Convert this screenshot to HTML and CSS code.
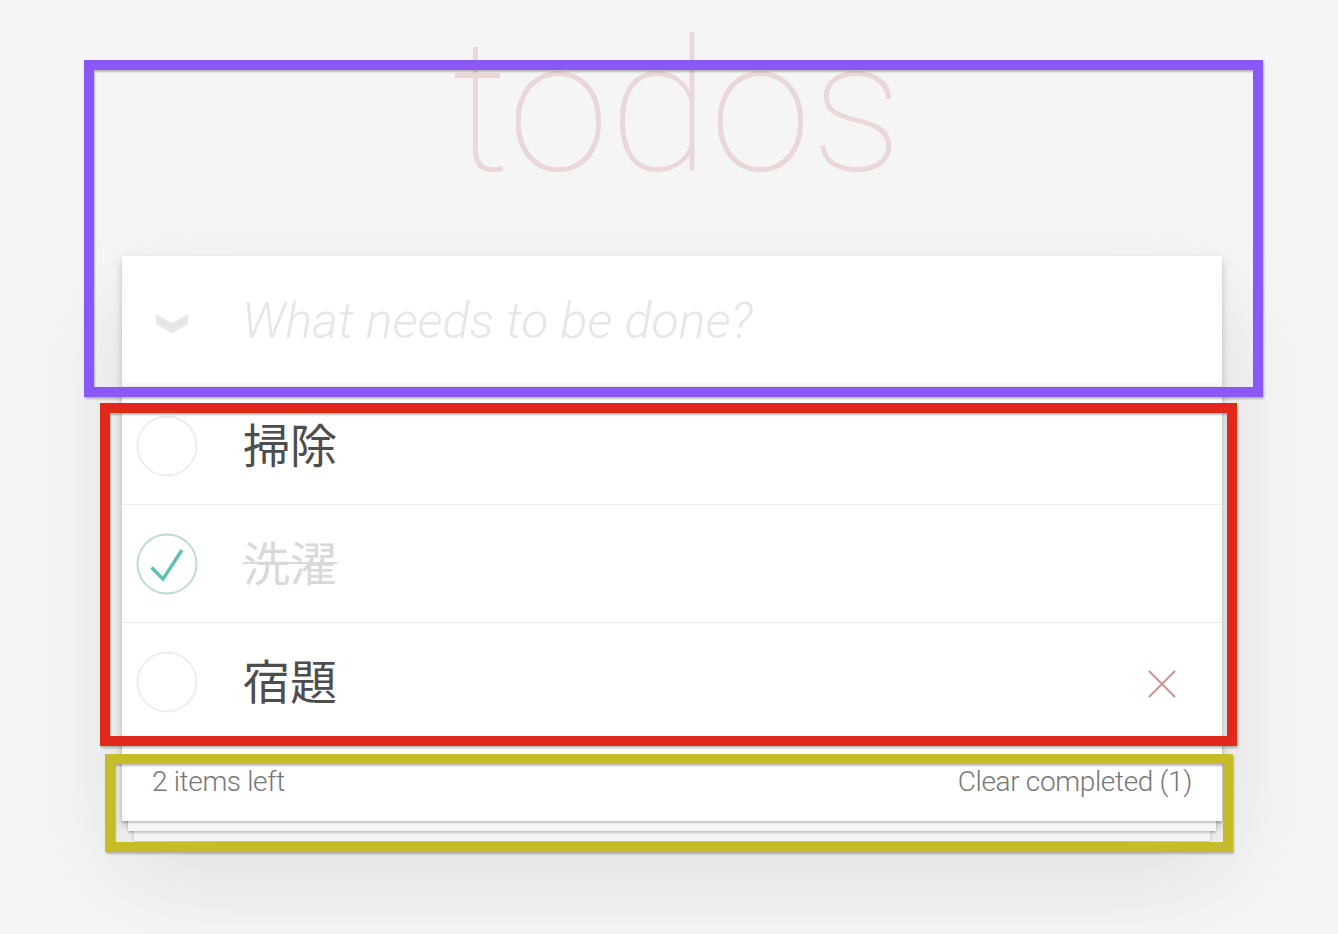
FILE: index.html
```html
<!DOCTYPE html>
<html lang="ja">
<head>
<meta charset="utf-8">
<title>todos</title>
<link rel="stylesheet" href="styles.css">
</head>
<body>
<div class="page">
  <h1 class="title">todos</h1>
  <section class="app">
    <header class="new-row">
      <span class="toggle-all">
        <svg width="32" height="20" viewBox="0 0 32 20"><polygon points="0,0 16,9 32,0 32,10 16,19.5 0,10" fill="#e6e6e6"/></svg>
      </span>
      <input class="new-todo" type="text" placeholder="What needs to be done?">
    </header>
    <ul class="list">
      <li class="item">
        <span class="check">
          <svg width="62" height="62" viewBox="0 0 62 62"><circle cx="31" cy="31" r="29.5" fill="none" stroke="#ededed" stroke-width="2"/></svg>
        </span>
        <span class="label">掃除</span>
      </li>
      <li class="item done">
        <span class="check">
          <svg width="62" height="62" viewBox="0 0 62 62"><circle cx="31" cy="31" r="29.5" fill="none" stroke="#bddad5" stroke-width="2"/><polyline points="15.5,34.5 27,46 46,17" fill="none" stroke="#5dc2af" stroke-width="3.4"/></svg>
        </span>
        <span class="label">洗濯</span>
      </li>
      <li class="item">
        <span class="check">
          <svg width="62" height="62" viewBox="0 0 62 62"><circle cx="31" cy="31" r="29.5" fill="none" stroke="#ededed" stroke-width="2"/></svg>
        </span>
        <span class="label">宿題</span>
        <span class="destroy">
          <svg width="30" height="30" viewBox="0 0 30 30"><path d="M2 2 L28 28 M28 2 L2 28" stroke="#cc9a9a" stroke-width="2.4" fill="none"/></svg>
        </span>
      </li>
    </ul>
    <footer class="footer">
      <span class="count">2 items left</span>
      <span class="clear">Clear completed (1)</span>
    </footer>
  </section>
</div>
<div class="mark mark-purple"></div>
<div class="mark mark-red"></div>
<div class="mark mark-yellow"></div>
</body>
</html>
```

FILE: styles.css
```css
html, body {
  margin: 0;
  padding: 0;
}
body {
  background: #f5f5f5;
  font-family: Roboto, "Liberation Sans", "Noto Sans CJK JP", sans-serif;
  color: #4d4d4d;
  width: 1338px;
  height: 934px;
  overflow: hidden;
  position: relative;
}
.page {
  width: 1100px;
  margin: 0 0 0 122px;
}
.title {
  margin: 0;
  height: 256px;
  box-sizing: border-box;
  padding-top: 15px;
  padding-left: 10px;
  font-size: 184px;
  line-height: 184px;
  font-weight: 100;
  text-align: center;
  color: rgba(175, 47, 47, 0.15);
  font-family: Roboto, "Liberation Sans", sans-serif;
}
.app {
  background: #fff;
  box-shadow: 0 4px 8px rgba(0,0,0,0.2), 0 50px 100px rgba(0,0,0,0.1);
}
.new-row {
  height: 130px;
  display: flex;
  align-items: center;
  box-shadow: inset 0 -4px 2px rgba(0,0,0,0.03);
}
.toggle-all {
  width: 120px;
  flex: none;
  display: flex;
  justify-content: flex-start;
  padding-left: 34px;
  box-sizing: border-box;
  margin-top: 6px;
}
.toggle-all svg { display: block; }
.new-todo {
  flex: 1;
  border: 0;
  outline: none;
  background: transparent;
  padding: 0;
  margin: 0;
  font-family: Roboto, "Liberation Sans", sans-serif;
  font-size: 50px;
  font-weight: 300;
  height: 70px;
  color: #4d4d4d;
}
.new-todo::placeholder {
  font-style: italic;
  font-weight: 300;
  color: #e6e6e6;
}
.list {
  list-style: none;
  margin: 0;
  padding: 0;
  border-top: 1px solid #e6e6e6;
}
.item {
  height: 117px;
  border-bottom: 1px solid #ededed;
  display: flex;
  align-items: center;
}
.item:last-child { border-bottom: 0; }
.check {
  width: 62px;
  height: 62px;
  margin-left: 14px;
  flex: none;
}
.check svg { display: block; }
.label {
  margin-left: 45px;
  margin-top: -6px;
  flex: 1;
  font-family: "Noto Sans CJK JP", sans-serif;
  font-size: 47px;
  font-weight: 400;
  color: #4d4d4d;
  line-height: 1;
}
.done .label {
  color: #d9d9d9;
  text-decoration: line-through;
  text-decoration-thickness: 2px;
}
.destroy {
  width: 30px;
  height: 30px;
  margin-right: 45px;
  margin-top: 4px;
  flex: none;
}
.destroy svg { display: block; }
.footer {
  border-top: 1px solid #e6e6e6;
  padding: 21px 30px 0;
  display: flex;
  justify-content: space-between;
  align-items: flex-start;
  font-size: 28px;
  font-weight: 300;
  letter-spacing: -0.35px;
  color: #777;
  line-height: 40px;
  box-sizing: border-box;
  height: 81px;
  background: #fff;
  box-shadow: 0 2px 2px rgba(0,0,0,0.2),
              0 16px 0 -6px #f6f6f6,
              0 18px 2px -6px rgba(0,0,0,0.2),
              0 32px 0 -12px #f6f6f6,
              0 34px 4px -12px rgba(0,0,0,0.2);
}
.mark {
  position: absolute;
  border: 10px solid;
  box-sizing: border-box;
  box-shadow: 1px 2px 2px rgba(0,0,0,0.25), inset 1px 2px 2px rgba(0,0,0,0.25);
  pointer-events: none;
}
.mark-purple {
  left: 84px;
  top: 60px;
  width: 1179px;
  height: 337px;
  border-color: #8a58f7;
}
.mark-red {
  left: 100px;
  top: 403px;
  width: 1137px;
  height: 343px;
  border-color: #e0281b;
}
.mark-yellow {
  left: 105px;
  top: 754px;
  width: 1128px;
  height: 98px;
  border-color: #c6bc27;
}
```
